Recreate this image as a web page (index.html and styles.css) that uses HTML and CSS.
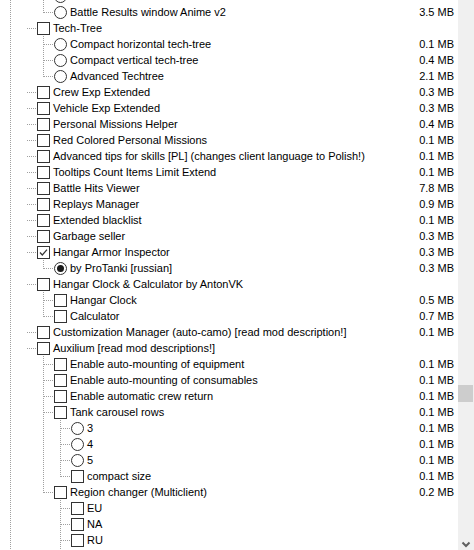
FILE: index.html
```html
<!DOCTYPE html>
<html>
<head>
<meta charset="utf-8">
<link rel="stylesheet" href="styles.css">
</head>
<body>
<div class="win">
  <div class="list">
    <div class="rows">
      <div class="row"><span class="ind l2"></span><span class="br t"></span><span class="rb"></span><span class="lbl"></span></div>
      <div class="row"><span class="ind l2"></span><span class="br e"></span><span class="rb"></span><span class="lbl">Battle Results window Anime v2</span><span class="sz">3.5 MB</span></div>
      <div class="row"><span class="ind l1"></span><span class="br"></span><span class="cb"></span><span class="lbl">Tech-Tree</span></div>
      <div class="row"><span class="ind l2"></span><span class="br t"></span><span class="rb"></span><span class="lbl">Compact horizontal tech-tree</span><span class="sz">0.1 MB</span></div>
      <div class="row"><span class="ind l2"></span><span class="br t"></span><span class="rb"></span><span class="lbl">Compact vertical tech-tree</span><span class="sz">0.4 MB</span></div>
      <div class="row"><span class="ind l2"></span><span class="br e"></span><span class="rb"></span><span class="lbl">Advanced Techtree</span><span class="sz">2.1 MB</span></div>
      <div class="row"><span class="ind l1"></span><span class="br"></span><span class="cb"></span><span class="lbl">Crew Exp Extended</span><span class="sz">0.3 MB</span></div>
      <div class="row"><span class="ind l1"></span><span class="br"></span><span class="cb"></span><span class="lbl">Vehicle Exp Extended</span><span class="sz">0.3 MB</span></div>
      <div class="row"><span class="ind l1"></span><span class="br"></span><span class="cb"></span><span class="lbl">Personal Missions Helper</span><span class="sz">0.4 MB</span></div>
      <div class="row"><span class="ind l1"></span><span class="br"></span><span class="cb"></span><span class="lbl">Red Colored Personal Missions</span><span class="sz">0.1 MB</span></div>
      <div class="row"><span class="ind l1"></span><span class="br"></span><span class="cb"></span><span class="lbl">Advanced tips for skills [PL] (changes client language to Polish!)</span><span class="sz">0.1 MB</span></div>
      <div class="row"><span class="ind l1"></span><span class="br"></span><span class="cb"></span><span class="lbl">Tooltips Count Items Limit Extend</span><span class="sz">0.1 MB</span></div>
      <div class="row"><span class="ind l1"></span><span class="br"></span><span class="cb"></span><span class="lbl">Battle Hits Viewer</span><span class="sz">7.8 MB</span></div>
      <div class="row"><span class="ind l1"></span><span class="br"></span><span class="cb"></span><span class="lbl">Replays Manager</span><span class="sz">0.9 MB</span></div>
      <div class="row"><span class="ind l1"></span><span class="br"></span><span class="cb"></span><span class="lbl">Extended blacklist</span><span class="sz">0.1 MB</span></div>
      <div class="row"><span class="ind l1"></span><span class="br"></span><span class="cb"></span><span class="lbl">Garbage seller</span><span class="sz">0.3 MB</span></div>
      <div class="row"><span class="ind l1"></span><span class="br"></span><span class="cb on"><svg viewBox="0 0 11 11" width="11" height="11"><path d="M2 5.5 L4.3 8 L9 2.6" fill="none" stroke="#333" stroke-width="1.2"/></svg></span><span class="lbl">Hangar Armor Inspector</span><span class="sz">0.3 MB</span></div>
      <div class="row"><span class="ind l2"></span><span class="br e"></span><span class="rb on"></span><span class="lbl">by ProTanki [russian]</span><span class="sz">0.3 MB</span></div>
      <div class="row"><span class="ind l1"></span><span class="br"></span><span class="cb"></span><span class="lbl">Hangar Clock &amp; Calculator by AntonVK</span></div>
      <div class="row"><span class="ind l2"></span><span class="br t"></span><span class="cb"></span><span class="lbl">Hangar Clock</span><span class="sz">0.5 MB</span></div>
      <div class="row"><span class="ind l2"></span><span class="br e"></span><span class="cb"></span><span class="lbl">Calculator</span><span class="sz">0.7 MB</span></div>
      <div class="row"><span class="ind l1"></span><span class="br"></span><span class="cb"></span><span class="lbl">Customization Manager (auto-camo) [read mod description!]</span><span class="sz">0.1 MB</span></div>
      <div class="row"><span class="ind l1"></span><span class="br"></span><span class="cb"></span><span class="lbl">Auxilium [read mod descriptions!]</span></div>
      <div class="row"><span class="ind l2"></span><span class="br t"></span><span class="cb"></span><span class="lbl">Enable auto-mounting of equipment</span><span class="sz">0.1 MB</span></div>
      <div class="row"><span class="ind l2"></span><span class="br t"></span><span class="cb"></span><span class="lbl">Enable auto-mounting of consumables</span><span class="sz">0.1 MB</span></div>
      <div class="row"><span class="ind l2"></span><span class="br t"></span><span class="cb"></span><span class="lbl">Enable automatic crew return</span><span class="sz">0.1 MB</span></div>
      <div class="row"><span class="ind l2"></span><span class="br t"></span><span class="cb"></span><span class="lbl">Tank carousel rows</span><span class="sz">0.1 MB</span></div>
      <div class="row"><span class="ind l3 v"></span><span class="br t"></span><span class="rb"></span><span class="lbl">3</span><span class="sz">0.1 MB</span></div>
      <div class="row"><span class="ind l3 v"></span><span class="br t"></span><span class="rb"></span><span class="lbl">4</span><span class="sz">0.1 MB</span></div>
      <div class="row"><span class="ind l3 v"></span><span class="br t"></span><span class="rb"></span><span class="lbl">5</span><span class="sz">0.1 MB</span></div>
      <div class="row"><span class="ind l3 v"></span><span class="br e"></span><span class="cb"></span><span class="lbl">compact size</span><span class="sz">0.1 MB</span></div>
      <div class="row"><span class="ind l2"></span><span class="br e"></span><span class="cb"></span><span class="lbl">Region changer (Multiclient)</span><span class="sz">0.2 MB</span></div>
      <div class="row"><span class="ind l3"></span><span class="br t"></span><span class="cb"></span><span class="lbl">EU</span></div>
      <div class="row"><span class="ind l3"></span><span class="br t"></span><span class="cb"></span><span class="lbl">NA</span></div>
      <div class="row"><span class="ind l3"></span><span class="br t"></span><span class="cb"></span><span class="lbl">RU</span></div>
      <div class="row"><span class="ind l3"></span><span class="br t"></span><span class="cb"></span><span class="lbl"></span></div>
    </div>
  </div>
  <div class="sb">
    <div class="sb-top"></div>
    <div class="thumb"></div>
    <div class="sb-fill"></div>
    <div class="sb-btn"><svg viewBox="0 0 16 17" width="16" height="17"><path d="M4.5 9.5 L8 13 L11.5 9.5" fill="none" stroke="#606060" stroke-width="2"/></svg></div>
  </div>
</div>
</body>
</html>
```
FILE: styles.css
```css
html, body {
  margin: 0;
  padding: 0;
  background: #fff;
  overflow: hidden;
}
.win {
  display: flex;
  width: 474px;
  height: 550px;
  font-family: "Liberation Sans", Arial, sans-serif;
  font-size: 11px;
  color: #000;
}
.list {
  flex: 1;
  overflow: hidden;
  background-image: linear-gradient(#a0a0a0 50%, transparent 50%);
  background-size: 1px 2px;
  background-repeat: repeat-y;
  background-position: 10px 0;
}
.rows {
  margin-top: -12px;
}
.row {
  display: flex;
  align-items: flex-start;
  height: 16px;
  padding-right: 4px;
  white-space: nowrap;
}
.ind { flex-shrink: 0; height: 16px; }
.ind.l1 { width: 26px; }
.ind.l2 { width: 43px; }
.ind.l3 { width: 60px; }
.ind.v {
  background-image: linear-gradient(#a0a0a0 50%, transparent 50%);
  background-size: 1px 2px;
  background-repeat: repeat-y;
  background-position: 43px 0;
}
.br {
  flex-shrink: 0;
  width: 11px;
  height: 16px;
  background-image: linear-gradient(to right, transparent 50%, #a0a0a0 50%);
  background-size: 2px 1px;
  background-repeat: repeat-x;
  background-position: 0 8px;
}
.br.t {
  background-image: linear-gradient(#a0a0a0 50%, transparent 50%), linear-gradient(to right, transparent 50%, #a0a0a0 50%);
  background-size: 1px 2px, 2px 1px;
  background-repeat: repeat-y, repeat-x;
  background-position: 0 0, 0 8px;
}
.br.e {
  background-image: linear-gradient(to bottom, #a0a0a0 0 1px, transparent 1px 2px, #a0a0a0 2px 3px, transparent 3px 4px, #a0a0a0 4px 5px, transparent 5px 6px, #a0a0a0 6px 7px, transparent 7px 8px, #a0a0a0 8px 9px, transparent 9px), linear-gradient(to right, transparent 50%, #a0a0a0 50%);
  background-size: 1px 16px, 2px 1px;
  background-repeat: no-repeat, repeat-x;
  background-position: 0 0, 0 8px;
}
.cb, .rb {
  flex-shrink: 0;
  box-sizing: border-box;
  width: 13px;
  height: 13px;
  margin-top: 2px;
  border: 1px solid #333;
  background: #fff;
  display: flex;
  align-items: center;
  justify-content: center;
}
.rb { border-radius: 50%; }
.rb.on::after {
  content: "";
  width: 7px;
  height: 7px;
  border-radius: 50%;
  background: #1a1a1a;
}
.cb svg { display: block; }
.lbl {
  margin-left: 3px;
  line-height: 16px;
}
.sz {
  margin-left: auto;
  line-height: 16px;
}
.sb {
  width: 16px;
  flex-shrink: 0;
  background: #f0f0f0;
  display: flex;
  flex-direction: column;
}
.sb-top { height: 385px; }
.thumb {
  height: 17px;
  width: 15px;
  background: #cdcdcd;
}
.sb-fill { flex: 1; }
.sb-btn { height: 17px; }
.sb-btn svg { display: block; }
```
